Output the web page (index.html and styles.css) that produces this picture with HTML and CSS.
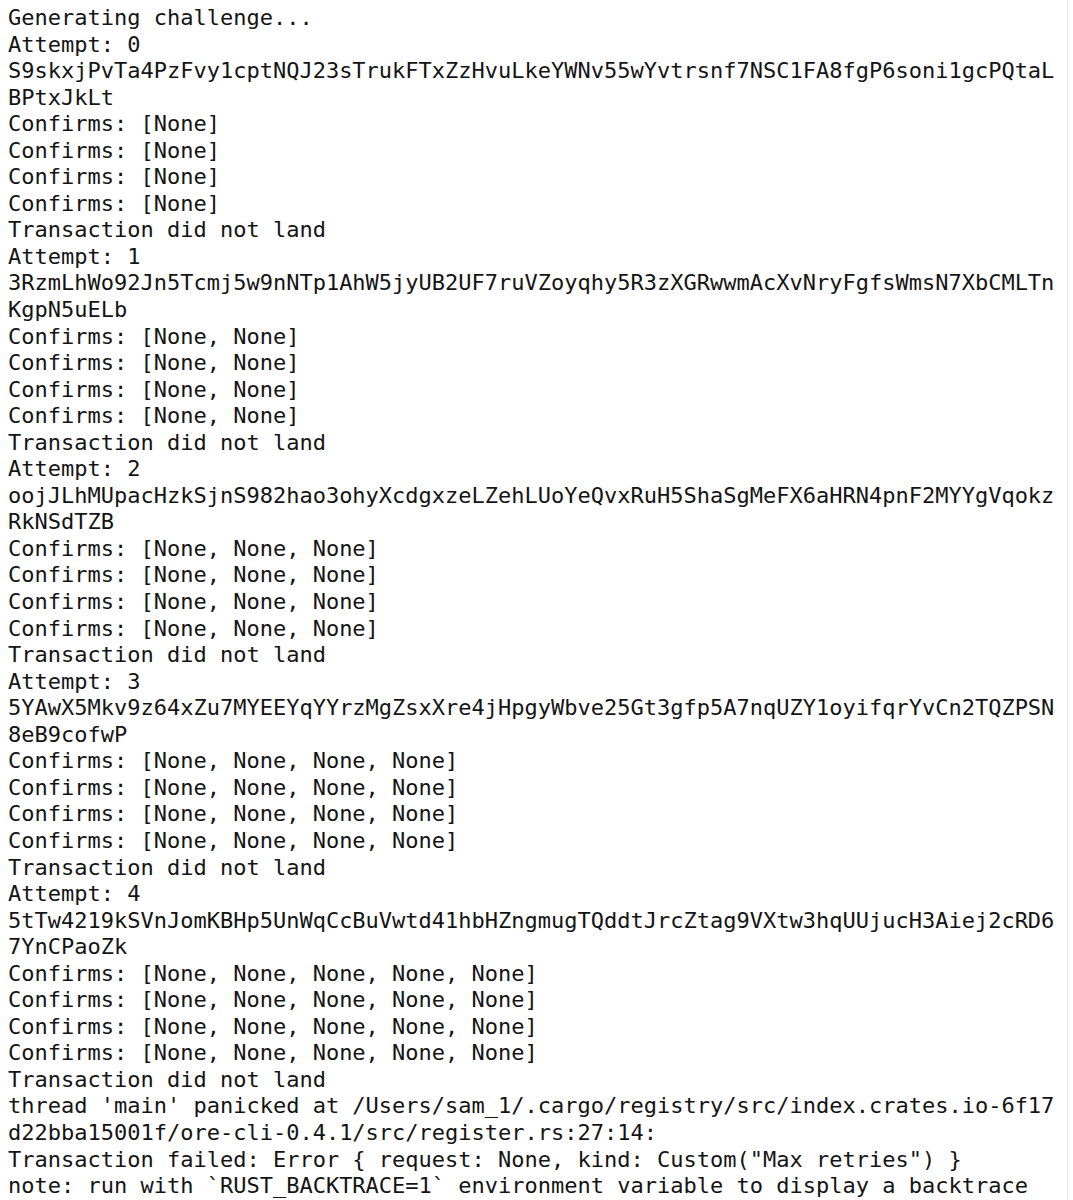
FILE: index.html
```html
<!DOCTYPE html>
<html lang="en">
<head>
<meta charset="utf-8">
<title>Terminal</title>
<link rel="stylesheet" href="styles.css">
</head>
<body>
<div class="window">
<pre class="term">Generating challenge...
Attempt: 0
S9skxjPvTa4PzFvy1cptNQJ23sTrukFTxZzHvuLkeYWNv55wYvtrsnf7NSC1FA8fgP6soni1gcPQtaL
BPtxJkLt
Confirms: [None]
Confirms: [None]
Confirms: [None]
Confirms: [None]
Transaction did not land
Attempt: 1
3RzmLhWo92Jn5Tcmj5w9nNTp1AhW5jyUB2UF7ruVZoyqhy5R3zXGRwwmAcXvNryFgfsWmsN7XbCMLTn
KgpN5uELb
Confirms: [None, None]
Confirms: [None, None]
Confirms: [None, None]
Confirms: [None, None]
Transaction did not land
Attempt: 2
oojJLhMUpacHzkSjnS982hao3ohyXcdgxzeLZehLUoYeQvxRuH5ShaSgMeFX6aHRN4pnF2MYYgVqokz
RkNSdTZB
Confirms: [None, None, None]
Confirms: [None, None, None]
Confirms: [None, None, None]
Confirms: [None, None, None]
Transaction did not land
Attempt: 3
5YAwX5Mkv9z64xZu7MYEEYqYYrzMgZsxXre4jHpgyWbve25Gt3gfp5A7nqUZY1oyifqrYvCn2TQZPSN
8eB9cofwP
Confirms: [None, None, None, None]
Confirms: [None, None, None, None]
Confirms: [None, None, None, None]
Confirms: [None, None, None, None]
Transaction did not land
Attempt: 4
5tTw4219kSVnJomKBHp5UnWqCcBuVwtd41hbHZngmugTQddtJrcZtag9VXtw3hqUUjucH3Aiej2cRD6
7YnCPaoZk
Confirms: [None, None, None, None, None]
Confirms: [None, None, None, None, None]
Confirms: [None, None, None, None, None]
Confirms: [None, None, None, None, None]
Transaction did not land
thread 'main' panicked at /Users/sam_1/.cargo/registry/src/index.crates.io-6f17
d22bba15001f/ore-cli-0.4.1/src/register.rs:27:14:
Transaction failed: Error { request: None, kind: Custom("Max retries") }
note: run with `RUST_BACKTRACE=1` environment variable to display a backtrace</pre>
<div class="scrolltrack"></div>
</div>
</body>
</html>
```

FILE: styles.css
```css
html, body {
  margin: 0;
  padding: 0;
  background: #ffffff;
}

.window {
  display: flex;
  width: 1073px;
  height: 1200px;
  overflow: hidden;
}

.term {
  flex: 1;
  margin: 0;
  padding: 5px 0 0 8px;
  font-family: "DejaVu Sans Mono", "Liberation Mono", monospace;
  font-size: 22px;
  line-height: 26.55px;
  color: #141414;
  white-space: pre;
  overflow: hidden;
}

.scrolltrack {
  width: 5px;
  border-left: 1px solid #e8e8e8;
  background: #ffffff;
}
```
